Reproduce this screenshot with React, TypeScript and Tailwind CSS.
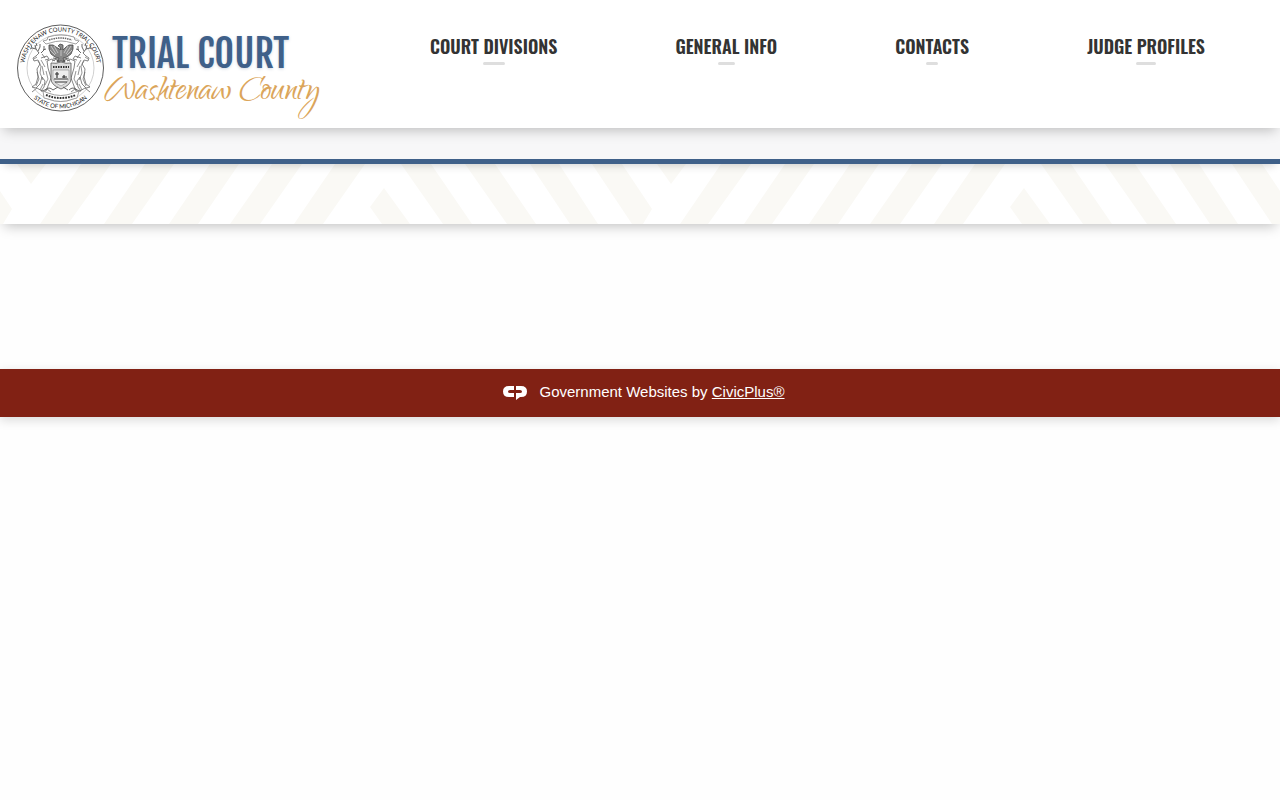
const navItems = ['Court Divisions', 'General Info', 'Contacts', 'Judge Profiles']

// Light stripes of the chevron band, one 640x60 tile
const stripes = [
    '17,0 46,0 31,20',
    '0,27 12,45 3,60 0,60',
    '81,0 111,0 68,60 40,60',
    '145,0 174,0 132,60 104,60',
    '210,0 239,0 198,60 169,60',
    '272,0 302,0 260,60 230,60',
    '335,0 365,0 323,60 294,60',
    '384,24 410,60 382,60 370,43',
    '401,0 431,0 472,60 443,60',
    '465,0 495,0 536,60 507,60',
    '530,0 559,0 598,60 570,60',
    '592,0 622,0 640,27 640,60 632,60'
]

function Elk() {
    return (
        <g>
            {/* Antlers */}
            <path d="M22 29l-3-4-1-4M19 25l-4-1-1-3M21 27l2-4 0-3M24 29l3-3 0-4M20 22l-1-3M15 24l-2 1M26 26l3-1" strokeWidth="1" />
            {/* Head, body and legs */}
            <path d="M22 29l-3 3-3 2 1 3 4-1 2 4-3 5 1 8-2 7-4 3 4 1 4-4 2-7 3 4-1 6-3 4 5 0 2-5 3-8-3-10-1-7 5-2 3 2M25 30l3 4" fill="#fff" />
            <path d="M21 37l3 5-1 7 3 7M24 36l4 7M20 48l2 7-3 7M26 60l-3 6M17 35l3-2M29 47l2 8-3 6M25 42l2 9" strokeWidth="1" opacity=".7" />
            <path d="M24 34l6-2 2 3-4 1M15 68l5-4 5 3 5-2 4 3" />
        </g>
    )
}

function Seal() {
    return (
        <svg viewBox="-1 0 88 88" className="size-22 shrink-0" fill="none" stroke="#666" strokeWidth=".8" role="img" aria-label="Washtenaw County Trial Court seal">
            <defs>
                <path id="seal-top" d="M7 44a36.500 36.500 0 0 1 73 0" />
                <path id="seal-bottom" d="M3 44a40.500 40.500 0 0 0 81 0" />
            </defs>
            <circle cx="43.500" cy="44" r="43" stroke="#333" />
            <circle cx="43.500" cy="44" r="33.500" stroke="#bbb" strokeWidth=".7" />
            <g fill="#222" stroke="none" fontFamily="Lato, sans-serif" fontSize="6" textAnchor="middle">
                <text><textPath href="#seal-top" startOffset="50%">WASHTENAW COUNTY TRIAL COURT</textPath></text>
                <text><textPath href="#seal-bottom" startOffset="50%">STATE OF MICHIGAN</textPath></text>
            </g>

            {/* Upper ribbon */}
            <path d="M26 17l4-1 1-3q13-4 26 0l1 3 4 1-3 3-4-1q-11-4-22 0l-4 1z" fill="#fff" stroke="#888" />
            <path d="M32 16q11-4 23 0" strokeWidth="1.500" strokeDasharray="1.500 .8" />

            {/* Eagle */}
            <path d="M44 26l-1-3-2-1 2-2 3 1 0 5 3-3 3-2 4 0 0 4-2 5-4 3-4 1 2 4-4-1-4 1 2-4-4-1-4-3-2-5 0-4 4 0 3 2z" fill="#888" stroke="#444" />
            <path d="M34 22l5 8M37 22l4 7M33 26l5 5M54 22l-5 8M51 22l-4 7M55 26l-5 5M44 26v6" stroke="#ddd" strokeWidth=".7" />
            <path d="M35 37q4-3 7 0M46 37q3-3 7 0M36 34l5 1M47 35l5-1" stroke="#444" />

            <Elk />
            <g transform="translate(88 0) scale(-1 1)"><Elk /></g>

            {/* Shield */}
            <path d="M34 39q5 1 10-1 5 2 10 1v16q0 6-10 10-10-4-10-10z" fill="#ddd" stroke="#555" />
            <path d="M36 46h16v9q-1 4-8 7-7-3-8-7z" fill="#eee" stroke="#888" strokeWidth=".6" />
            <path d="M36 43h16" stroke="#333" strokeWidth="2" strokeDasharray="1.500 1" />
            <path d="M40 48v6M38 50h4M37 55h14M38 58h12M45 53h5M47 51v3" stroke="#333" strokeWidth="1.200" />

            {/* Lower ribbon */}
            <path d="M26 67l5 2q13 5 25 0l6-2-2 7-4 1q-12 5-25 0l-4-1z" fill="#fff" stroke="#888" />
            <path d="M29 71q15 6 30 0" stroke="#333" strokeWidth="2" strokeDasharray="1.800 1" />
            <path d="M28 66q4-4 8 0M52 66q4-4 8 0M36 66l5-3M51 66l-5-3" strokeWidth="1" />
        </svg>
    )
}

function CivicPlusLogo() {
    return (
        <svg viewBox="0 0 24 15" className="h-[15px] w-6" fill="#fff" aria-hidden="true">
            <path d="M11 1v4H7Q5 5 5 6.500T7 8h4v4H6Q0 12 0 6.500T6 1z" />
            <path d="M13 1h5q6 0 6 5.500T18 12h-1l-4 3V8h4q2 0 2-1.500T17 5h-4z" />
        </svg>
    )
}

function Header() {
    return (
        <header className="relative z-20 flex h-32 bg-white shadow-[0_6px_12px_-4px_rgba(0,0,0,0.25)]">
            <a href="#" className="flex w-[371px] shrink-0 items-start pt-6 pl-4">
                <Seal />
                <span className="flex flex-col pt-2.5 pl-2">
                    <span className="font-['Fjalla_One',sans-serif] text-[38px] leading-10 text-[#3f6089] [text-shadow:0_1px_3px_rgba(63,96,137,0.25)]">
                        TRIAL COURT
                    </span>
                    <span className="-ml-2 font-['Qwigley',cursive] text-[43px] leading-10 whitespace-nowrap text-[#dba55a]">
                        Washtenaw County
                    </span>
                </span>
            </a>
            <nav className="flex flex-1 justify-around pt-8 pr-4">
                {navItems.map((item) => (
                    <a
                        key={item}
                        href="#"
                        className="flex flex-col items-center px-7 font-['Oswald',sans-serif] text-[18px] leading-7 font-semibold whitespace-nowrap text-[#333] uppercase"
                    >
                        {item}
                        <span className="mt-0.5 h-[3px] w-[17%] shrink-0 rounded-xs bg-[#dedede]" />
                    </a>
                ))}
            </nav>
        </header>
    )
}

export default function App() {
    return (
        <div className="min-h-screen bg-[#fefefe]">
            <Header />
            <div className="relative z-10 h-9 border-b-5 border-[#3f6089] bg-[#f7f7f8] shadow-[0_6px_10px_-5px_rgba(0,0,0,0.2)]" />
            <main>
                <section className="bg-white shadow-[0_6px_12px_-4px_rgba(0,0,0,0.25)]">
                    <svg className="block h-15 w-full" aria-hidden="true">
                        <defs>
                            <pattern id="chevrons" width="640" height="60" patternUnits="userSpaceOnUse">
                                {stripes.map((points) => (
                                    <polygon key={points} points={points} fill="#faf9f5" />
                                ))}
                            </pattern>
                        </defs>
                        <rect width="100%" height="60" fill="url(#chevrons)" />
                    </svg>
                </section>
                <div className="h-[145px]" />
            </main>
            <footer className="flex h-12 items-center justify-center gap-3 bg-[#812114] pb-0.5 pl-2 font-['Liberation_Sans',Arial,sans-serif] text-[15px] text-white shadow-[0_3px_10px_rgba(0,0,0,0.15)]">
                <CivicPlusLogo />
                <p>
                    Government Websites by <a href="#" className="underline">CivicPlus®</a>
                </p>
            </footer>
        </div>
    )
}
